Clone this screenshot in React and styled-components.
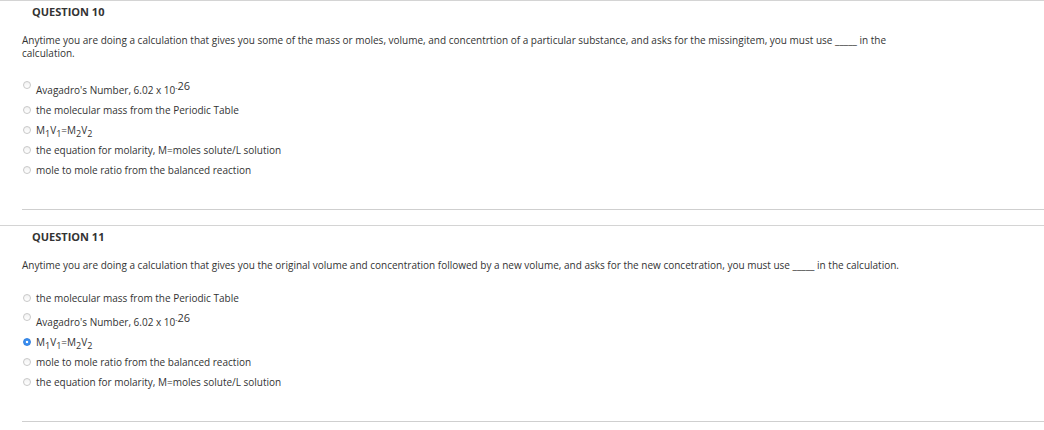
import React from 'react';
import styled, { createGlobalStyle } from 'styled-components';

const GlobalStyle = createGlobalStyle`
    body{
        margin:0;
        background:#fff;
        font-family:"Open Sans", "Noto Sans", sans-serif;
        color:#333;
    }
`;

const Page = styled.div`
    width:1044px;
    padding-bottom:8px;
`;

const Question = styled.section`
    border-top:1px solid #d4d4d4;
    & + &{
        margin-top:15px;
    }
`;

const Title = styled.h3`
    margin:0;
    padding:4px 0 0 32px;
    font-size:11px;
    line-height:14px;
    font-weight:700;
    color:#333;
`;

const Body = styled.div`
    padding:0 0 0 22px;
`;

const Prompt = styled.p`
    margin:15px 0 0;
    max-width:900px;
    font-size:10px;
    line-height:13px;
`;

const Options = styled.ul`
    list-style:none;
    margin:16px 0 0;
    padding:0;
`;

const Option = styled.li`
    display:flex;
    align-items:${p => p.$tall ? 'flex-start' : 'center'};
    gap:5px;
    padding:3px 0 3px 1px;
    font-size:10px;
    line-height:14px;
`;

const Radio = styled.span`
    flex:none;
    box-sizing:border-box;
    width:8px;
    height:8px;
    border-radius:50%;
    margin-top:${p => p.$tall ? '2px' : '0'};
    border:1px solid ${p => p.$checked ? '#2f7fe0' : '#c8c8c8'};
    background:${p => p.$checked
        ? 'radial-gradient(circle, #fff 0 1.3px, #3a8ef0 1.6px)'
        : 'linear-gradient(#f2f2f2, #fff)'};
`;

const Label = styled.span`
    color:#333;
    sub{
        font-size:9px;
        line-height:0;
        vertical-align:-3px;
    }
`;

const Exp = styled.sup`
    line-height:${p => p.$small ? '0' : '14px'};
    vertical-align:4px;
    font-size:${p => p.$small ? '7px' : '11px'};
`;

const Separator = styled.hr`
    margin:29px 0 0 22px;
    border:none;
    border-top:1px solid #cfcfcf;
    height:0;
`;

const Avogadro = () => (
    <>Avagadro's Number, 6.02 x 10<Exp $small>-</Exp><Exp>26</Exp></>
);

const Molar = () => (
    <>M<sub>1</sub>V<sub>1</sub>=M<sub>2</sub>V<sub>2</sub></>
);

const questions = [
    {
        number: 10,
        text: 'Anytime you are doing a calculation that gives you some of the mass or moles, volume, and concentrtion of a particular substance, and asks for the missingitem, you must use _____ in the calculation.',
        options: [
            { label: <Avogadro />, tall: true },
            { label: 'the molecular mass from the Periodic Table' },
            { label: <Molar /> },
            { label: 'the equation for molarity, M=moles solute/L solution' },
            { label: 'mole to mole ratio from the balanced reaction' },
        ],
    },
    {
        number: 11,
        text: 'Anytime you are doing a calculation that gives you the original volume and concentration followed by a new volume, and asks for the new concetration, you must use _____ in the calculation.',
        options: [
            { label: 'the molecular mass from the Periodic Table' },
            { label: <Avogadro />, tall: true },
            { label: <Molar />, checked: true },
            { label: 'mole to mole ratio from the balanced reaction' },
            { label: 'the equation for molarity, M=moles solute/L solution' },
        ],
    },
];

const App = () => (
    <Page>
        <GlobalStyle />
        {questions.map(q => (
            <Question key={q.number}>
                <Title>QUESTION {q.number}</Title>
                <Body>
                    <Prompt>{q.text}</Prompt>
                    <Options>
                        {q.options.map((o, i) => (
                            <Option key={i} $tall={o.tall}>
                                <Radio $tall={o.tall} $checked={o.checked} />
                                <Label>{o.label}</Label>
                            </Option>
                        ))}
                    </Options>
                </Body>
                <Separator />
            </Question>
        ))}
    </Page>
);

export default App;
